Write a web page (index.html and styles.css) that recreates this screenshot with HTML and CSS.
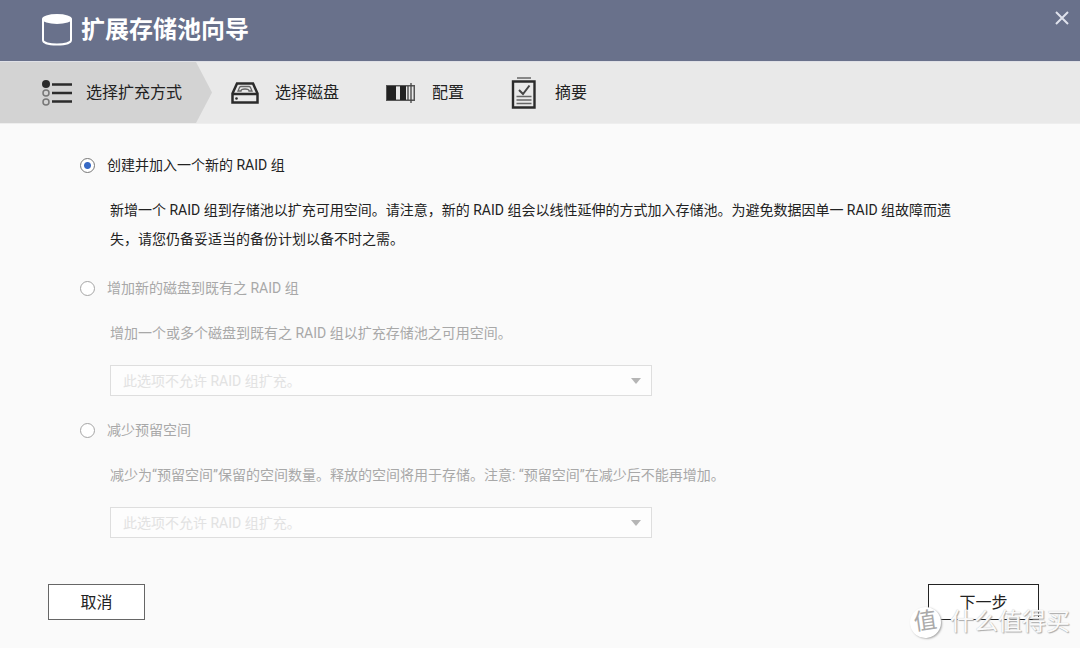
FILE: index.html
```html
<!DOCTYPE html>
<html lang="zh-CN">
<head>
<meta charset="utf-8">
<meta name="viewport" content="width=device-width, initial-scale=1">
<title>扩展存储池向导</title>
<link rel="stylesheet" href="styles.css">
</head>
<body>
<div class="wizard">
  <header class="header">
    <svg class="header-icon" width="32" height="34" viewBox="0 0 32 34" aria-hidden="true">
      <path d="M2 6v21c0 6 28 6 28 0V6" fill="none" stroke="#fff" stroke-width="2"/>
      <ellipse cx="16" cy="6" rx="15" ry="5" fill="#fff"/>
    </svg>
    <h1 class="title">扩展存储池向导</h1>
    <button class="close" type="button" aria-label="关闭">
      <svg width="14" height="14" viewBox="0 0 14 14" aria-hidden="true"><path d="M1 1l12 12M13 1L1 13" stroke="#dfe2ec" stroke-width="2"/></svg>
    </button>
  </header>

  <ol class="steps">
    <li class="step step-current" aria-current="step">
      <svg width="30" height="26" viewBox="0 0 30 26" aria-hidden="true">
        <circle cx="4" cy="4" r="4" fill="#2b2b2b"/>
        <g fill="none" stroke="#777" stroke-width="1.5"><circle cx="4" cy="13" r="3"/><circle cx="4" cy="22" r="3"/></g>
        <path d="M10 4.500h20M10 13h20M10 21.500h20" stroke="#2b2b2b" stroke-width="2.400"/>
      </svg>
      <span>选择扩充方式</span>
    </li>
    <li class="step">
      <svg width="28" height="22" viewBox="0 0 28 22" aria-hidden="true">
        <path d="M6 1.500h16l4.500 10v9h-25v-9z" fill="none" stroke="#2b2b2b" stroke-width="2.500"/>
        <path d="M1 12h26" stroke="#2b2b2b" stroke-width="2.500"/>
        <path d="M7 9l1.500-3.500Q9 4.500 10 4.500h8q1 0 1.500 1L21 9h-3q0-2-4-2t-4 2z" fill="none" stroke="#666" stroke-width="1.300"/>
        <circle cx="5.500" cy="16.500" r="1.300" fill="#2b2b2b"/>
      </svg>
      <span>选择磁盘</span>
    </li>
    <li class="step">
      <svg width="30" height="22" viewBox="0 0 30 22" aria-hidden="true">
        <path d="M.75 3.750h27.500v14.500H.75z" fill="none" stroke="#555" stroke-width="1.500"/>
        <path d="M1 4h9v14H1zM14 4h6v14h-6z" fill="#222"/>
        <path d="M22 4v14M25 1v20" stroke="#444" stroke-width="1.300"/>
      </svg>
      <span>配置</span>
    </li>
    <li class="step step-summary">
      <svg width="26" height="32" viewBox="0 0 26 32" aria-hidden="true">
        <path d="M6 1h14" stroke="#666" stroke-width="1.500"/>
        <path d="M2 4.500h21.500v26H2z" fill="none" stroke="#2b2b2b" stroke-width="2.400"/>
        <path d="M8 13l4 4 6.500-8.500" fill="none" stroke="#444" stroke-width="2"/>
        <path d="M5.500 19.500h15M5.500 23h15M5.500 26.500h15" stroke="#666" stroke-width="1.400"/>
      </svg>
      <span>摘要</span>
    </li>
  </ol>

  <main class="content">
    <section class="option">
      <div class="choice"><input class="radio" type="radio" name="method" id="create" checked><label for="create">创建并加入一个新的 RAID 组</label></div>
      <p class="description">新增一个 RAID 组到存储池以扩充可用空间。请注意，新的 RAID 组会以线性延伸的方式加入存储池。为避免数据因单一 RAID 组故障而遗失，请您仍备妥适当的备份计划以备不时之需。</p>
    </section>
    <section class="option option-disabled">
      <div class="choice"><input class="radio" type="radio" name="method" id="add" disabled><label for="add">增加新的磁盘到既有之 RAID 组</label></div>
      <p class="description">增加一个或多个磁盘到既有之 RAID 组以扩充存储池之可用空间。</p>
      <div class="picker"><select class="select" aria-label="增加新的磁盘到既有之 RAID 组" disabled><option>此选项不允许 RAID 组扩充。</option></select></div>
    </section>
    <section class="option option-disabled">
      <div class="choice"><input class="radio" type="radio" name="method" id="reduce" disabled><label for="reduce">减少预留空间</label></div>
      <p class="description">减少为“预留空间”保留的空间数量。释放的空间将用于存储。注意: “预留空间”在减少后不能再增加。</p>
      <div class="picker"><select class="select" aria-label="减少预留空间" disabled><option>此选项不允许 RAID 组扩充。</option></select></div>
    </section>
  </main>

  <footer class="footer">
    <button class="button" type="button">取消</button>
    <button class="button button-next" type="button">下一步</button>
  </footer>
  <div class="watermark"><span class="watermark-badge">值</span><span>什么值得买</span></div>
</div>
</body>
</html>
```
FILE: styles.css
```css
* {
  box-sizing: border-box;
}

body {
  margin: 0;
  background: #fafafa;
  color: #222;
  font: 14px/22px Roboto, "Noto Sans CJK SC", sans-serif;
}

button,
select {
  font-family: inherit;
}

.wizard {
  position: relative;
  display: flex;
  flex-direction: column;
  min-height: 100vh;
}

.header {
  display: flex;
  align-items: center;
  gap: 8px;
  height: 62px;
  padding: 0 11px 2px 41px;
  background: #69718b;
  border-bottom: 1px solid #dfe0e6;
}

.title {
  margin: 0;
  color: #fff;
  font-size: 24px;
  line-height: 32px;
  font-weight: 700;
}

.close {
  display: flex;
  align-self: flex-start;
  margin: 11px 0 0 auto;
  padding: 0;
  border: 0;
  background: none;
}

.steps {
  display: flex;
  margin: 0;
  padding: 0;
  height: 62px;
  list-style: none;
  background: #e9e9e9;
  border-bottom: 1px solid #eee;
  font-size: 16px;
}

.step {
  display: flex;
  align-items: center;
  gap: 16px;
  padding: 0 28px 0 19px;
}

.step-current {
  padding: 0 30px 0 42px;
  gap: 14px;
  background: #d3d3d3;
  clip-path: polygon(0 0, calc(100% - 16px) 0, 100% 50%, calc(100% - 16px) 100%, 0 100%);
}

.step-summary {
  gap: 18px;
}

.content {
  display: flex;
  flex: 1;
  flex-direction: column;
  gap: 23px;
  padding: 30px 112px 0 80px;
}

.choice {
  display: flex;
  align-items: center;
  gap: 12px;
}

.radio {
  appearance: none;
  flex: none;
  width: 15px;
  height: 15px;
  margin: 0;
  border: 1px solid #777;
  border-radius: 50%;
  background: #fff;
}

.radio:checked {
  background: radial-gradient(circle, #3769c5 3px, #fff 4px);
}

.radio:disabled {
  border: 1px solid #a5a5a5;
}

.description {
  margin: 20px 0 0 30px;
  line-height: 29px;
}

.option-disabled {
  color: #a8a8a8;
}

.picker {
  position: relative;
  max-width: 542px;
  margin: 17px 0 0 30px;
}

.picker::after {
  content: "";
  position: absolute;
  top: 13px;
  right: 11px;
  border: 5px solid transparent;
  border-top: 6px solid #b5b5b5;
  border-bottom: 0;
}

.select {
  appearance: none;
  display: block;
  width: 100%;
  height: 31px;
  padding: 0 30px 0 12px;
  border: 1px solid #dedede;
  border-radius: 0;
  background: #fdfdfd;
  color: #e2e2e2;
  font-size: 14px;
  opacity: 1;
}

.footer {
  display: flex;
  justify-content: space-between;
  padding: 0 41px 28px 48px;
}

.button {
  min-width: 97px;
  height: 36px;
  padding: 0 30px 2px;
  border: 1px solid #666;
  background: #fff;
  color: #222;
  font-size: 16px;
}

.button-next {
  min-width: 111px;
  border-color: #222;
}

.watermark {
  position: absolute;
  right: 10px;
  bottom: 10px;
  display: flex;
  align-items: center;
  gap: 9px;
  color: #fafafa;
  font-size: 24px;
  line-height: 32px;
  text-shadow: 1px 1px 1px #aaa, 0 0 1px #bbb;
  pointer-events: none;
}

.watermark-badge {
  width: 31px;
  height: 31px;
  border-radius: 50%;
  background: #fff;
  box-shadow: 1px 1px 2px #aaa;
  color: #aaa;
  font-size: 23px;
  line-height: 30px;
  text-align: center;
  text-shadow: none;
  transform: rotate(-8deg);
}
```
